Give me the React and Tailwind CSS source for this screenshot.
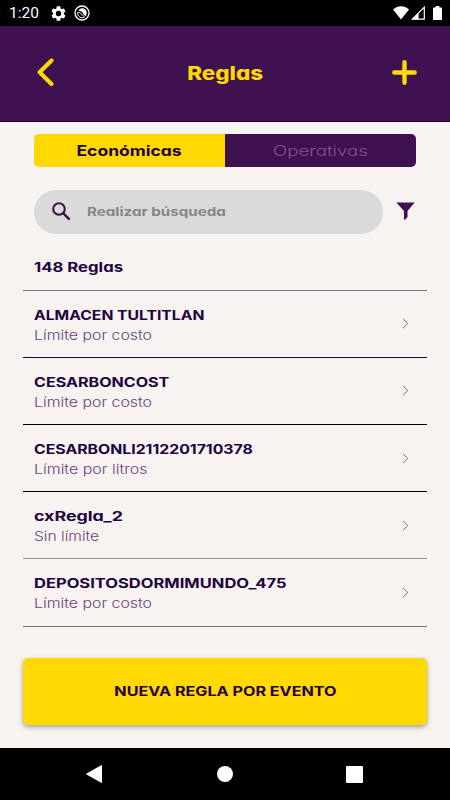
import React, { useState } from 'react';

const reglas = [
  { nombre: 'ALMACEN TULTITLAN', limite: 'Límite por costo', nombreScale: 'scale-x-[1.207]', limiteScale: 'scale-x-[1.22]', line: 'border-[#20004a]' },
  { nombre: 'CESARBONCOST', limite: 'Límite por costo', nombreScale: 'scale-x-[1.237]', limiteScale: 'scale-x-[1.22]', line: 'border-black' },
  { nombre: 'CESARBONLI2112201710378', limite: 'Límite por litros', nombreScale: 'scale-x-[1.216]', limiteScale: 'scale-x-[1.227]', line: 'border-black' },
  { nombre: 'cxRegla_2', limite: 'Sin límite', nombreScale: 'scale-x-[1.37]', limiteScale: 'scale-x-[1.2]', line: 'border-[#969196]' },
  { nombre: 'DEPOSITOSDORMIMUNDO_475', limite: 'Límite por costo', nombreScale: 'scale-x-[1.27]', limiteScale: 'scale-x-[1.22]', line: 'border-[#77747a]' },
];

// Wide lettering: the text is stretched from its left edge or its centre
const Wide = ({ className, children }) => (
  <span className={`inline-block whitespace-nowrap ${className}`}>{children}</span>
);

const StatusBar = () => (
  <div className="h-[26px] shrink-0 bg-black text-white flex items-center justify-between pl-[9px] pr-2">
    <div className="flex items-center">
      <span className="w-[42px] font-[Roboto] text-[15.5px] leading-none pt-[2px]">1:20</span>
      <svg width="15" height="15" viewBox="2 2 20 20" fill="currentColor">
        <path d="M19.14 12.94c.04-.3.06-.61.06-.94s-.02-.64-.07-.94l2.03-1.58a.49.49 0 0 0 .12-.61l-1.92-3.32a.49.49 0 0 0-.59-.22l-2.39.96a7 7 0 0 0-1.62-.94l-.36-2.54A.48.48 0 0 0 13.92 2.4h-3.84a.48.48 0 0 0-.47.41l-.36 2.54c-.59.24-1.13.57-1.62.94l-2.39-.96a.48.48 0 0 0-.59.22L2.74 8.87a.48.48 0 0 0 .12.61l2.03 1.58a6 6 0 0 0 0 1.88l-2.03 1.58a.49.49 0 0 0-.12.61l1.92 3.32c.12.22.37.29.59.22l2.39-.96c.5.38 1.03.7 1.62.94l.36 2.54c.05.24.24.41.48.41h3.84c.24 0 .44-.17.47-.41l.36-2.54c.59-.24 1.13-.56 1.62-.94l2.39.96c.22.08.47 0 .59-.22l1.92-3.32a.48.48 0 0 0-.12-.61zM12 15.6a3.6 3.6 0 1 1 0-7.2 3.6 3.6 0 0 1 0 7.2z" />
      </svg>
      <svg className="ml-2" width="16" height="16" viewBox="0 0 16 16" fill="none">
        <circle cx="8" cy="8" r="7" stroke="currentColor" strokeWidth="1.3" />
        <path d="M4.4 5.4C6.4 2.6 10 2.7 11.8 5c1.4 1.9 1.2 4.4-.2 6.2L9.2 9 8.6 7.4 6.2 6z" fill="currentColor" />
        <path d="M3.6 7.6c1.6-.4 2.6 0 3.4 1.2.6 1 1.6 1 3.6 3.2-3.4 2-7-.2-7-4.4z" stroke="currentColor" strokeWidth="1" />
      </svg>
    </div>
    <div className="flex items-center">
      <svg width="16" height="14" viewBox="0 0 16 14" fill="currentColor">
        <path d="M8 13.6L0 3.6C4.4-.9 11.6-.9 16 3.6z" />
      </svg>
      <svg className="ml-[2px]" width="14" height="14" viewBox="0 0 14 14">
        <path d="M1.3 13.2L13.3 1.2v12z" fill="none" stroke="currentColor" strokeWidth="1.2" />
        <path d="M1 13.6L7.6 7v6.6z" fill="currentColor" />
      </svg>
      <svg className="ml-2" width="9" height="14" viewBox="0 0 9 14" fill="currentColor">
        <path d="M2.6 0h3.8v1.5H8.3c.4 0 .7.3.7.7v11c0 .5-.3.8-.7.8H.7c-.4 0-.7-.3-.7-.8v-11c0-.4.3-.7.7-.7h1.9z" />
      </svg>
    </div>
  </div>
);

const Header = () => (
  <header className="h-24 shrink-0 bg-[#3e1150] border-b border-[#22033a] text-[#ffd900] flex items-center justify-between pl-[37px] pr-[33px]">
    <button aria-label="Volver" className="pb-[2px]">
      <svg width="17" height="29" viewBox="0 0 17 29" fill="none" stroke="currentColor" strokeWidth="4.2" strokeLinecap="round" strokeLinejoin="round">
        <path d="M14.5 2.6L2.6 14.2l11.9 11.7" />
      </svg>
    </button>
    <h1 className="text-[19px] leading-none font-extrabold pl-1">
      <Wide className="scale-x-[1.18]">Reglas</Wide>
    </h1>
    <button aria-label="Agregar" className="pb-[2px]">
      <svg width="25" height="25" viewBox="0 0 25 25" fill="none" stroke="currentColor" strokeWidth="4.4" strokeLinecap="round">
        <path d="M12.5 2.3v20.4M2.3 12.5h20.4" />
      </svg>
    </button>
  </header>
);

const Regla = ({ regla }) => (
  <li className={`h-[67.2px] border-b ${regla.line} pl-[11px] pr-[18px] flex items-center justify-between`}>
    <div className="flex flex-col items-start pt-[2px]">
      <Wide className={`origin-left text-[13px] leading-5 font-bold text-[#22033f] ${regla.nombreScale}`}>{regla.nombre}</Wide>
      <Wide className={`origin-left text-[13px] leading-5 font-light text-[#6b4379] ${regla.limiteScale}`}>{regla.limite}</Wide>
    </div>
    <svg width="7" height="11" viewBox="0 0 7 11" fill="none" stroke="#77747a" strokeWidth="1">
      <path d="M1 .8l4.8 4.7L1 10.2" />
    </svg>
  </li>
);

const App = () => {
  const [tab, setTab] = useState('economicas');

  return (
    <div className="w-[450px] h-[800px] overflow-hidden flex flex-col bg-[#f6f3f0] font-[Inter,sans-serif] [font-feature-settings:'cv11']">
      <StatusBar />
      <Header />

      <main className="flex-1 flex flex-col px-[23px] pt-3">
        <div className="mx-[11px] h-[33px] flex">
          <button onClick={() => setTab('economicas')} className={`w-1/2 rounded-l-[5px] text-[14px] ${tab === 'economicas' ? 'bg-[#ffd900] font-bold text-[#22033f]' : 'bg-[#3e1150] font-light text-[#81558c]'}`}>
            <Wide className="scale-x-[1.25]">Económicas</Wide>
          </button>
          <button onClick={() => setTab('operativas')} className={`w-1/2 rounded-r-[5px] text-[14px] ${tab === 'operativas' ? 'bg-[#ffd900] font-bold text-[#22033f]' : 'bg-[#3e1150] font-light text-[#81558c]'}`}>
            <Wide className="scale-x-[1.335]">Operativas</Wide>
          </button>
        </div>

        <div className="mt-[22.5px] ml-[11px] mr-[12px] flex items-center justify-between">
          <div className="w-[349px] h-[44.5px] rounded-full bg-[#dadada] flex items-center pl-[18px]">
            <svg width="19" height="19" viewBox="0 0 19 19" fill="none" stroke="#3e1150" strokeWidth="2.1">
              <circle cx="7" cy="7" r="5.8" />
              <path d="M11.2 11.2l6.4 6.4" strokeWidth="2.5" />
            </svg>
            <Wide className="ml-4 origin-left text-[12px] font-bold text-[#858585] scale-x-[1.263]">Realizar búsqueda</Wide>
          </div>
          <svg width="19" height="19" viewBox="0 0 19 19" fill="#3e1150">
            <path d="M.3.5h18.4L11.5 9v6.2l-3.5 3V9z" />
          </svg>
        </div>

        <div className="h-[56.6px] border-b border-[#866f8e] pl-[11px] pt-[23px] text-[13px] leading-5 font-bold text-[#22033f]">
          <Wide className="origin-left scale-x-[1.285]">148 Reglas</Wide>
        </div>

        <ul>
          {reglas.map((regla) => (
            <Regla key={regla.nombre} regla={regla} />
          ))}
        </ul>

        <button className="mt-[31px] h-[67px] w-full rounded-[5px] bg-[#ffd900] pt-[1px] text-[13px] font-bold text-[#22033f] shadow-[0_2px_5px_rgba(0,0,0,0.35)]">
          <Wide className="scale-x-[1.242]">NUEVA REGLA POR EVENTO</Wide>
        </button>
      </main>

      <nav className="h-[52px] shrink-0 bg-black text-white flex items-center justify-between pl-[86px] pr-[87px]">
        <svg width="16" height="18" viewBox="0 0 16 18" fill="currentColor">
          <path d="M15.2.3c.4-.2.8 0 .8.5v16.4c0 .5-.4.7-.8.5L.5 9.4c-.4-.2-.4-.6 0-.8z" />
        </svg>
        <div className="ml-[2px] size-4 rounded-full bg-white" />
        <div className="size-[17px] rounded-[1px] bg-white" />
      </nav>
    </div>
  );
};

export default App;
